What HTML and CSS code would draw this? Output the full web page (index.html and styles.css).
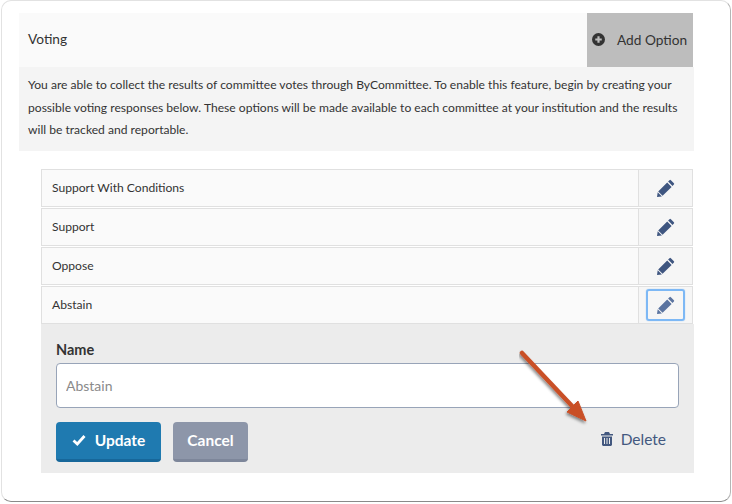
FILE: index.html
```html
<!DOCTYPE html>
<html lang="en">
<head>
  <meta charset="UTF-8" />
  <title>Voting</title>
  <link rel="stylesheet" href="styles.css">
</head>
<body>
  <div class="card">
    <div class="panel-head">
      <div class="panel-title">Voting</div>
      <div class="btn-add">
        <svg class="icon-plus" viewBox="0 0 12 12"><circle cx="6" cy="6" r="6" fill="#333"/><path d="M6 3v6M3 6h6" stroke="#bdbdbd" stroke-width="2"/></svg>
        Add Option
      </div>
    </div>
    <p class="intro">You are able to collect the results of committee votes through ByCommittee. To enable this feature, begin by creating your possible voting responses below. These options will be made available to each committee at your institution and the results will be tracked and reportable.</p>

    <div class="options">
      <div class="option">
        <div class="option-name">Support With Conditions</div>
        <div class="option-edit"><svg class="icon-pencil" viewBox="0 0 18 18"><path d="M12.500 1.200a1 1 0 0 1 1.400 0l3 3a1 1 0 0 1 0 1.400l-1.400 1.400-4.400-4.400zM10.200 3.500l4.400 4.400-9 8.900-4.400-4.400zM.7 13.200l4.200 4.200L0 18z"/></svg></div>
      </div>
      <div class="option">
        <div class="option-name">Support</div>
        <div class="option-edit"><svg class="icon-pencil" viewBox="0 0 18 18"><path d="M12.500 1.200a1 1 0 0 1 1.400 0l3 3a1 1 0 0 1 0 1.400l-1.400 1.400-4.400-4.400zM10.200 3.500l4.400 4.400-9 8.900-4.400-4.400zM.7 13.200l4.200 4.200L0 18z"/></svg></div>
      </div>
      <div class="option">
        <div class="option-name">Oppose</div>
        <div class="option-edit"><svg class="icon-pencil" viewBox="0 0 18 18"><path d="M12.500 1.200a1 1 0 0 1 1.400 0l3 3a1 1 0 0 1 0 1.400l-1.400 1.400-4.400-4.400zM10.200 3.500l4.400 4.400-9 8.900-4.400-4.400zM.7 13.200l4.200 4.200L0 18z"/></svg></div>
      </div>
      <div class="option">
        <div class="option-name">Abstain</div>
        <div class="option-edit"><span class="edit-focus"><svg class="icon-pencil is-active" viewBox="0 0 18 18"><path d="M12.500 1.200a1 1 0 0 1 1.400 0l3 3a1 1 0 0 1 0 1.400l-1.400 1.400-4.400-4.400zM10.200 3.500l4.400 4.400-9 8.900-4.400-4.400zM.7 13.200l4.200 4.200L0 18z"/></svg></span></div>
      </div>

      <div class="edit-form">
        <div class="field-label">Name</div>
        <input class="field-input" type="text" placeholder="Abstain" />
        <div class="form-actions">
          <button class="btn btn-update">
            <svg class="icon-check" viewBox="0 0 14 12"><path d="M1.500 6.500l3.800 3.500L12.500 2" fill="none" stroke="#fff" stroke-width="2.800"/></svg>
            Update
          </button>
          <button class="btn btn-cancel">Cancel</button>
          <div class="btn-delete">
            <svg class="icon-trash" viewBox="0 0 12 14"><path fill-rule="evenodd" d="M4 0h4l1 2h3v1.500H0V2h3zM1 4.500h10V13l-1 1H2l-1-1zM3 6v6h1V6zM5.500 6v6h1V6zM8 6v6h1V6z"/></svg>
            Delete
          </div>
        </div>
      </div>
    </div>

    <svg class="arrow" viewBox="0 0 80 84">
      <defs>
        <filter id="arrowShadow" x="-20%" y="-20%" width="140%" height="140%"><feDropShadow dx="-1" dy="2" stdDeviation="1.500" flood-color="#000" flood-opacity="0.45"/></filter>
      </defs>
      <g fill="#c94f28" stroke="#c94f28" filter="url(#arrowShadow)">
        <path d="M3 5L54 59" stroke-width="4.500" stroke-linecap="round"/>
        <path d="M67 73L48 64L59 53z" stroke-width="1"/>
      </g>
    </svg>
  </div>
</body>
</html>
```
FILE: styles.css
```css
body {
  margin: 0;
  background-color: #fff;
  font-family: 'Lato', 'Open Sans', sans-serif;
  color: #333;
}

.card {
  position: relative;
  box-sizing: border-box;
  width: 730px;
  height: 502px;
  margin-left: 1px;
  padding: 12px 37px 0 17px;
  background: #fff;
  border: 1px solid #e2e2e2;
  border-bottom: 1px solid #8a8a8a;
  border-right: 1px solid #b5b5b5;
  border-radius: 10px;
}

.panel-head {
  display: flex;
  justify-content: space-between;
  height: 54px;
  background-color: #fafafa;
}

.panel-title {
  padding-left: 9px;
  font-size: 13.700px;
  line-height: 52px;
}

.btn-add {
  display: flex;
  align-items: center;
  box-sizing: border-box;
  width: 106px;
  padding: 0 0 2px 5px;
  gap: 12px;
  background-color: #bdbdbd;
  font-size: 13.700px;
}

.icon-plus {
  width: 13px;
  height: 13px;
}

.intro {
  box-sizing: border-box;
  width: 675px;
  height: 84px;
  margin: 0;
  padding: 7px 9px 0;
  background-color: #f4f4f4;
  font-size: 12.100px;
  line-height: 22.500px;
}

.options {
  width: 653px;
  margin: 18px 0 0 22px;
}

.option {
  display: flex;
  box-sizing: border-box;
  width: 652px;
  height: 38px;
  margin-bottom: 1px;
  background-color: #fafafa;
  border: 1px solid #e0e0e0;
}

.option:nth-child(4) {
  margin-bottom: 0;
}

.option-name {
  flex: 1;
  padding-left: 10px;
  font-size: 12.100px;
  line-height: 35px;
}

.option-edit {
  display: flex;
  align-items: center;
  justify-content: center;
  width: 53px;
  border-left: 1px solid #e0e0e0;
  background-color: #f6f6f6;
}

.icon-pencil {
  width: 18px;
  height: 18px;
  fill: #3f5680;
}

.icon-pencil.is-active {
  fill: #5b74a0;
}

.edit-focus {
  display: flex;
  align-items: center;
  justify-content: center;
  box-sizing: border-box;
  width: 39px;
  height: 32px;
  border: 2px solid #7db8f5;
  border-radius: 3px;
  box-shadow: 0 0 1px #7db8f5;
}

.edit-form {
  box-sizing: border-box;
  height: 149px;
  padding: 17px 15px 0;
  background-color: #ececec;
}

.field-label {
  font-size: 14.500px;
  font-weight: 700;
  line-height: 18px;
  margin-bottom: 4px;
}

.field-input {
  display: block;
  box-sizing: border-box;
  width: 623px;
  height: 45px;
  padding: 0 9px;
  background: #fff;
  border: 1px solid #98a4b8;
  border-radius: 4px;
  font-family: inherit;
  font-size: 14px;
}

.field-input::placeholder {
  color: #8a8a8a;
}

.form-actions {
  display: flex;
  align-items: center;
  gap: 12px;
  margin-top: 14px;
}

.btn {
  display: flex;
  align-items: center;
  justify-content: center;
  box-sizing: border-box;
  height: 40px;
  padding: 0 0 1px;
  border: none;
  border-radius: 4px;
  color: #fff;
  font-family: inherit;
  font-size: 15.500px;
  font-weight: 700;
}

.btn-update {
  width: 105px;
  gap: 9px;
  background-color: #1f7ab0;
  border-bottom: 3px solid #17679a;
}

.btn-cancel {
  width: 75px;
  background-color: #8d96a9;
  border-bottom: 3px solid #7d869a;
}

.icon-check {
  width: 14px;
  height: 12px;
}

.btn-delete {
  display: flex;
  align-items: center;
  gap: 8px;
  margin: 0 13px 6px auto;
  color: #43587f;
  font-size: 15.500px;
}

.icon-trash {
  width: 12px;
  height: 14px;
  fill: #43587f;
}

.arrow {
  position: absolute;
  left: 517px;
  top: 347px;
  width: 80px;
  height: 84px;
}
```
